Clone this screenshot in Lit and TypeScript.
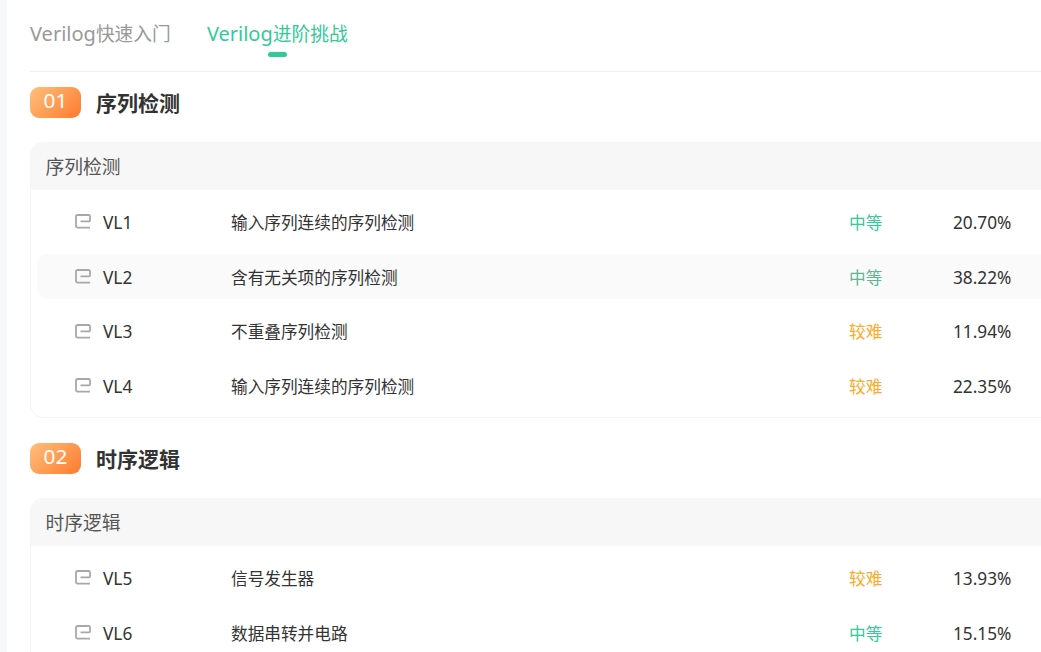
import { LitElement, html, css } from "lit";
import { customElement } from "lit/decorators.js";

type Row = { id: string; title: string; level: string; rate: string; hover?: boolean };
type Section = { no: string; name: string; rows: Row[] };

const SECTIONS: Section[] = [
  {
    no: "01",
    name: "序列检测",
    rows: [
      { id: "VL1", title: "输入序列连续的序列检测", level: "中等", rate: "20.70%" },
      { id: "VL2", title: "含有无关项的序列检测", level: "中等", rate: "38.22%", hover: true },
      { id: "VL3", title: "不重叠序列检测", level: "较难", rate: "11.94%" },
      { id: "VL4", title: "输入序列连续的序列检测", level: "较难", rate: "22.35%" },
    ],
  },
  {
    no: "02",
    name: "时序逻辑",
    rows: [
      { id: "VL5", title: "信号发生器", level: "较难", rate: "13.93%" },
      { id: "VL6", title: "数据串转并电路", level: "中等", rate: "15.15%" },
    ],
  },
];

@customElement("app-root")
export class AppRoot extends LitElement {
  static styles = css`
    :host {
      display: flex;
      width: 1041px;
      height: 652px;
      overflow: hidden;
      background: #fff;
      font-family: "Noto Sans", "Noto Sans CJK SC", sans-serif;
      color: #333;
    }
    .rail {
      flex: 0 0 7px;
      background: #f7f8fa;
    }
    .main {
      flex: 0 0 1034px;
      padding-left: 23px;
      box-sizing: border-box;
    }
    .tabs {
      display: flex;
      gap: 36px;
      height: 71px;
      border-bottom: 1px solid #eeeeee;
    }
    .tab {
      position: relative;
      padding-top: 20px;
      font-size: 18.75px;
      line-height: 28px;
      color: #999;
    }
    .tab.on {
      color: #32ca99;
    }
    .tab.on::after {
      content: "";
      position: absolute;
      left: 61px;
      top: 52px;
      width: 19px;
      height: 5px;
      border-radius: 3px;
      background: #32ca99;
    }
    .latin {
      font-size: 20px;
    }
    .sec-head {
      display: flex;
      align-items: center;
      gap: 15px;
      margin-top: 15px;
      height: 31px;
    }
    .sec + .sec .sec-head {
      margin-top: 25px;
    }
    .badge {
      width: 51px;
      height: 31px;
      border-radius: 9px;
      background: linear-gradient(135deg, #ffc07c, #ff7a2e);
      color: #fff;
      font-size: 20.8px;
      line-height: 27px;
      text-align: center;
    }
    .sec-title {
      font-size: 21px;
      line-height: 34px;
      font-weight: 700;
      color: #333;
    }
    .card {
      margin-top: 23.5px;
      width: 1040px;
      border: 1px solid #f5f5f5;
      border-radius: 13px;
      overflow: hidden;
    }
    .card-head {
      height: 47.5px;
      padding-left: 14.5px;
      background: #f7f7f7;
      font-size: 18.75px;
      line-height: 48px;
      color: #555;
    }
    .rows {
      display: flex;
      flex-direction: column;
      gap: 9px;
      padding: 9.17px 0 8.23px 6px;
    }
    .row {
      display: flex;
      align-items: center;
      box-sizing: border-box;
      height: 45.67px;
      padding-top: 2px;
      border-radius: 10px;
      font-size: 16.67px;
      line-height: 44px;
      color: #333;
    }
    .row.hover {
      background: #fafafa;
    }
    .ico {
      margin-left: 38px;
      margin-bottom: 2px;
      width: 16px;
      height: 15px;
      flex: none;
    }
    .id {
      margin-left: 12px;
      width: 128px;
      flex: none;
      font-size: 17.3px;
    }
    .title {
      width: 618px;
      flex: none;
    }
    .level {
      width: 104px;
      flex: none;
    }
    .level.mid {
      color: #32ca99;
    }
    .level.hard {
      color: #ffa929;
    }
    .row.hover .level.mid {
      color: #5cb892;
    }
    .rate {
      font-size: 17.25px;
    }
  `;

  private icon() {
    return html`<svg class="ico" viewBox="0 0 16 15" fill="none" stroke="#a8a8a8" stroke-width="1.8">
      <path d="M15 13.6H2.5a1.5 1.5 0 0 1-1.5-1.5V2.5A1.5 1.5 0 0 1 2.5 1h11A1.5 1.5 0 0 1 15 2.5v4a.8.8 0 0 1-.8.8H5.5" />
    </svg>`;
  }

  render() {
    return html`
      <div class="rail"></div>
      <div class="main">
        <div class="tabs">
          <div class="tab"><span class="latin">Verilog</span>快速入门</div>
          <div class="tab on"><span class="latin">Verilog</span>进阶挑战</div>
        </div>
        ${SECTIONS.map(
          (s) => html`
            <section class="sec">
              <div class="sec-head">
                <div class="badge">${s.no}</div>
                <div class="sec-title">${s.name}</div>
              </div>
              <div class="card">
                <div class="card-head">${s.name}</div>
                <div class="rows">
                  ${s.rows.map(
                    (r) => html`
                      <div class="row ${r.hover ? "hover" : ""}">
                        ${this.icon()}
                        <div class="id">${r.id}</div>
                        <div class="title">${r.title}</div>
                        <div class="level ${r.level === "中等" ? "mid" : "hard"}">${r.level}</div>
                        <div class="rate">${r.rate}</div>
                      </div>
                    `
                  )}
                </div>
              </div>
            </section>
          `
        )}
      </div>
    `;
  }
}
